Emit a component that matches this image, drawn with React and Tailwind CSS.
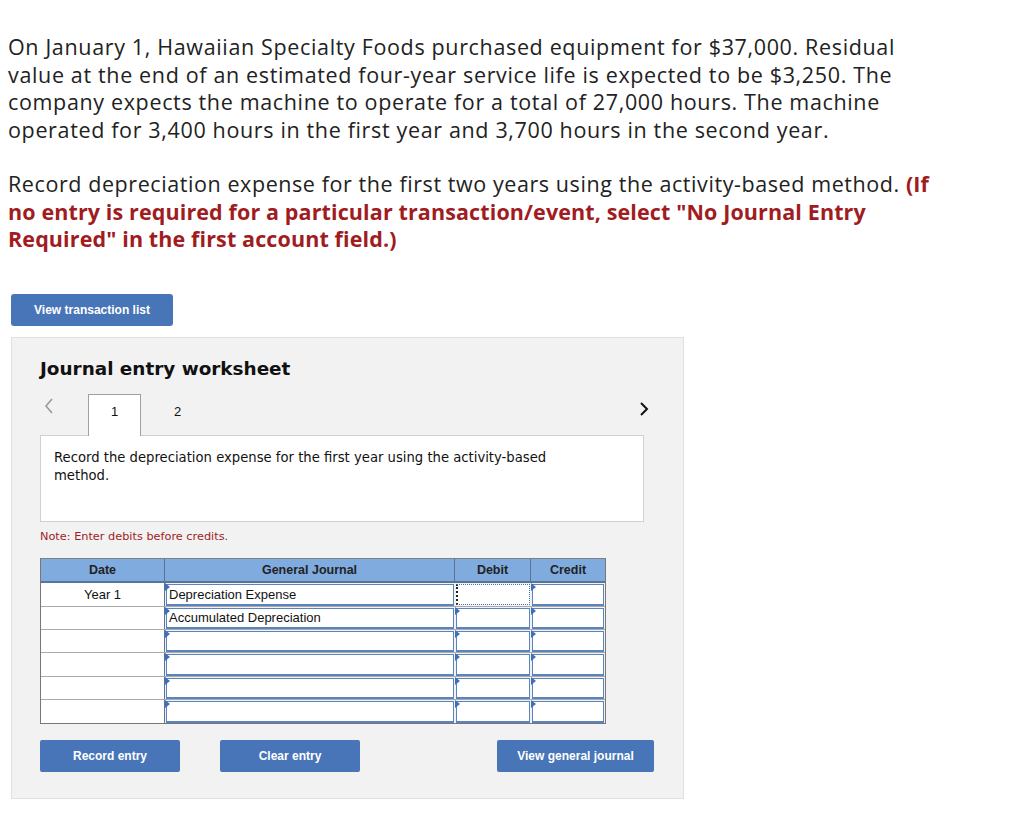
import React from "react";

const rows = [
  { date: "Year 1", account: "Depreciation Expense" },
  { date: "", account: "Accumulated Depreciation" },
  { date: "", account: "" },
  { date: "", account: "" },
  { date: "", account: "" },
  { date: "", account: "" },
];

function Marker() {
  return (
    <span className="absolute left-0 top-0 w-0 h-0 border-t-[4px] border-b-[4px] border-l-[5px] border-t-transparent border-b-transparent border-l-[#3f6fb5]" />
  );
}

function Cell({ children, focused }) {
  return (
    <div className="relative h-full p-[1px]">
      <div
        className={
          focused
            ? "h-full bg-white border border-dotted border-[#3f6fb5] border-l-2 border-l-[#222]"
            : "h-full bg-white border border-[#5b83c0] shadow-[0_1px_0_#5b83c0] flex items-center pl-[2px] text-[13px] text-[#111] leading-none"
        }
      >
        {children}
      </div>
      {!focused && <Marker />}
    </div>
  );
}

export default function App() {
  return (
    <div className="w-[1024px] min-h-[829px] bg-white pb-[31px]">
      <div className="pl-2 pt-[33px] font-['Open_Sans',sans-serif] text-[21.5px] leading-[27.5px] text-[#222] whitespace-nowrap">
        <p className="tracking-[0.65px]">
          On January 1, Hawaiian Specialty Foods purchased equipment for $37,000. Residual
          <br />
          value at the end of an estimated four-year service life is expected to be $3,250. The
          <br />
          company expects the machine to operate for a total of 27,000 hours. The machine
          <br />
          operated for 3,400 hours in the first year and 3,700 hours in the second year.
        </p>
        <p className="mt-[27px] tracking-[0.58px]">
          Record depreciation expense for the first two years using the activity-based method.{" "}
          <span className="font-bold text-[#a01c1f] tracking-[0.12px]">
            (If
            <br />
            no entry is required for a particular transaction/event, select "No Journal Entry
            <br />
            Required" in the first account field.)
          </span>
        </p>
      </div>

      <div className="pl-[11px] mt-[41px]">
        <button className="w-[162px] h-[32px] rounded-[3px] bg-[#4775b7] text-white font-['Liberation_Sans',Arial,sans-serif] font-bold text-[12px]">
          View transaction list
        </button>
      </div>

      <div className="ml-[11px] mt-[11px] w-[673px] bg-[#f2f2f2] border border-[#e0e0e0] pl-[28px] pr-[29px] pt-[19px] pb-[26px]">
        <h2 className="font-['DejaVu_Sans',Verdana,sans-serif] font-bold text-[18.4px] text-[#111] leading-[24px]">
          Journal entry worksheet
        </h2>

        <div className="mt-[14px] flex items-end h-[41px] relative">
          <span className="absolute left-[3px] top-[2px] text-[#999]">
            <svg width="12" height="18" viewBox="0 0 12 18" fill="none" stroke="currentColor" strokeWidth="1.6">
              <polyline points="9,2 3,9 9,16" />
            </svg>
          </span>
          <div className="ml-[48px] w-[53px] h-[42px] bg-white border border-b-0 border-[#a0a0a0] flex justify-center pt-[7px] font-['Liberation_Sans',Arial,sans-serif] text-[13px] text-[#111] relative z-10">
            1
          </div>
          <div className="ml-[33px] self-start pt-[7px] font-['Liberation_Sans',Arial,sans-serif] text-[13px] text-[#111]">
            2
          </div>
          <span className="absolute right-[4px] top-[6px] text-[#111]">
            <svg width="12" height="16" viewBox="0 0 12 16" fill="none" stroke="currentColor" strokeWidth="2">
              <polyline points="3,2 9,8 3,14" />
            </svg>
          </span>
        </div>

        <div className="w-[604px] h-[87px] -mt-[1px] bg-white border border-[#d0d0d0] px-[13px] pt-[13px] font-['DejaVu_Sans',Verdana,sans-serif] text-[13.2px] leading-[18px] text-[#111]">
          Record the depreciation expense for the first year using the activity-based
          <br />
          method.
        </div>

        <p className="mt-[7px] font-['DejaVu_Sans',Verdana,sans-serif] text-[11.3px] text-[#a01c1f]">
          Note: Enter debits before credits.
        </p>

        <div className="mt-[13px] w-[566px] border border-[#777] border-t-[#808080] font-['Liberation_Sans',Arial,sans-serif]">
          <div className="grid grid-cols-[124px_290px_76px_1fr] h-[24px] bg-[#80abdf] border-b-2 border-[#5a7497] text-[12.5px] font-bold text-[#222]">
            <div className="flex items-center justify-center border-r border-[#5a7497]">Date</div>
            <div className="flex items-center justify-center border-r border-[#5a7497]">General Journal</div>
            <div className="flex items-center justify-center border-r border-[#5a7497]">Debit</div>
            <div className="flex items-center justify-center">Credit</div>
          </div>
          {rows.map((r, i) => (
            <div
              key={i}
              className={`grid grid-cols-[124px_290px_76px_1fr] h-[23.3px] ${i < rows.length - 1 ? "border-b border-[#aaa]" : ""}`}
            >
              <div className="bg-white flex items-center justify-center text-[13px] text-[#111] border-r border-[#5a7497]">
                {r.date}
              </div>
              <Cell>{r.account}</Cell>
              <Cell focused={i === 0} />
              <Cell />
            </div>
          ))}
        </div>

        <div className="mt-[16px] flex font-['Liberation_Sans',Arial,sans-serif] text-[12px] font-bold text-white">
          <button className="shrink-0 w-[140px] h-[32px] rounded-[2px] bg-[#4775b7]">Record entry</button>
          <button className="shrink-0 ml-[40px] w-[140px] h-[32px] rounded-[2px] bg-[#4775b7]">Clear entry</button>
          <button className="shrink-0 ml-auto w-[157px] h-[32px] rounded-[2px] bg-[#4775b7]">View general journal</button>
        </div>
      </div>
    </div>
  );
}
